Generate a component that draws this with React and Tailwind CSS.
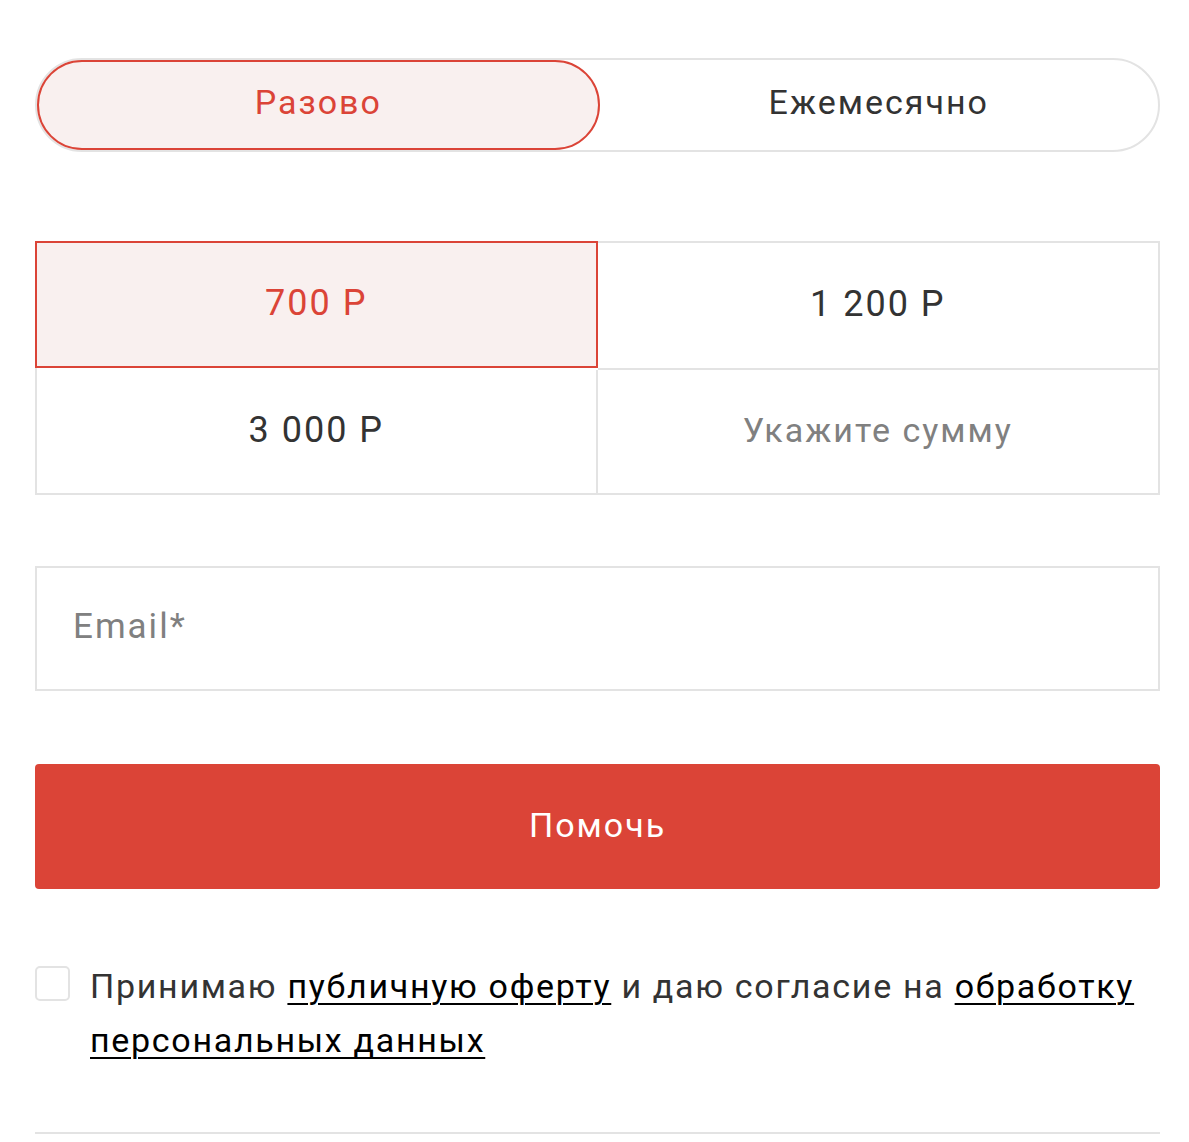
import React, { useState } from 'react';

const amounts = ['700 Р', '1 200 Р', '3 000 Р'];

export default function App() {
  const [period, setPeriod] = useState('once');
  const [amount, setAmount] = useState(0);

  return (
    <div className="bg-white min-h-[1142px] pl-[35px] pr-[29px] pt-[58px] text-[#333]" style={{ fontFamily: 'Roboto, "Open Sans", sans-serif' }}>
      {/* Period toggle */}
      <div className="flex h-[94px] rounded-full border-2 border-[#e3e3e3]">
        <button
          onClick={() => setPeriod('once')}
          className={`flex-1 rounded-full pb-[5px] text-[34px] tracking-[2px] ${
            period === 'once' ? 'border-2 border-[#db4437] bg-[#f9f0ef] text-[#db4437]' : 'text-[#333]'
          }`}
        >
          Разово
        </button>
        <button
          onClick={() => setPeriod('monthly')}
          className={`flex-1 rounded-full pb-[5px] text-[34px] tracking-[2px] ${
            period === 'monthly' ? 'border-2 border-[#db4437] bg-[#f9f0ef] text-[#db4437]' : 'text-[#333]'
          }`}
        >
          Ежемесячно
        </button>
      </div>

      {/* Amounts */}
      <div className="mt-[89px] grid grid-cols-2 border-2 border-[#e3e3e3]">
        {amounts.map((a, i) => (
          <button
            key={a}
            onClick={() => setAmount(i)}
            className={`${i < 2 ? 'h-[127px] border-b-2' : 'h-[123px]'} pb-[3px] text-[36px] tracking-[2px] ${
              i % 2 === 0 ? 'border-r-2' : ''
            } ${
              amount === i
                ? 'border-2 border-[#db4437] bg-[#f9f0ef] text-[#db4437] -m-[2px] mb-0 mr-0'
                : 'border-[#e3e3e3] text-[#333]'
            }`}
          >
            {a}
          </button>
        ))}
        <div className="h-[123px] pb-[3px] flex items-center justify-center text-[34px] tracking-[2px] text-[#808080]">
          Укажите сумму
        </div>
      </div>

      {/* Email */}
      <div className="mt-[71px] h-[125px] border-2 border-[#e3e3e3] flex items-center pl-[36px] pb-[3px]">
        <span className="text-[35px] tracking-[2px] text-[#808080]">Email*</span>
      </div>

      {/* Submit */}
      <button className="mt-[73px] w-full h-[125px] rounded-[4px] bg-[#db4437] pb-[3px] text-white text-[34px] tracking-[2px]">
        Помочь
      </button>

      {/* Consent */}
      <div className="mt-[76px] flex gap-[20px]">
        <div className="mt-[1px] w-[35px] h-[35px] shrink-0 rounded-[5px] border-2 border-[#e3e3e3]" />
        <p className="text-[34px] leading-[54px] tracking-[1.7px] text-[#333] -mt-[6px]">
          Принимаю <a className="underline underline-offset-[5px] decoration-2 text-black">публичную оферту</a> и даю согласие на{' '}
          <a className="underline underline-offset-[5px] decoration-2 text-black">обработку персональных данных</a>
        </p>
      </div>

      <div className="mt-[65px] border-t-2 border-[#e3e3e3]" />
    </div>
  );
}
